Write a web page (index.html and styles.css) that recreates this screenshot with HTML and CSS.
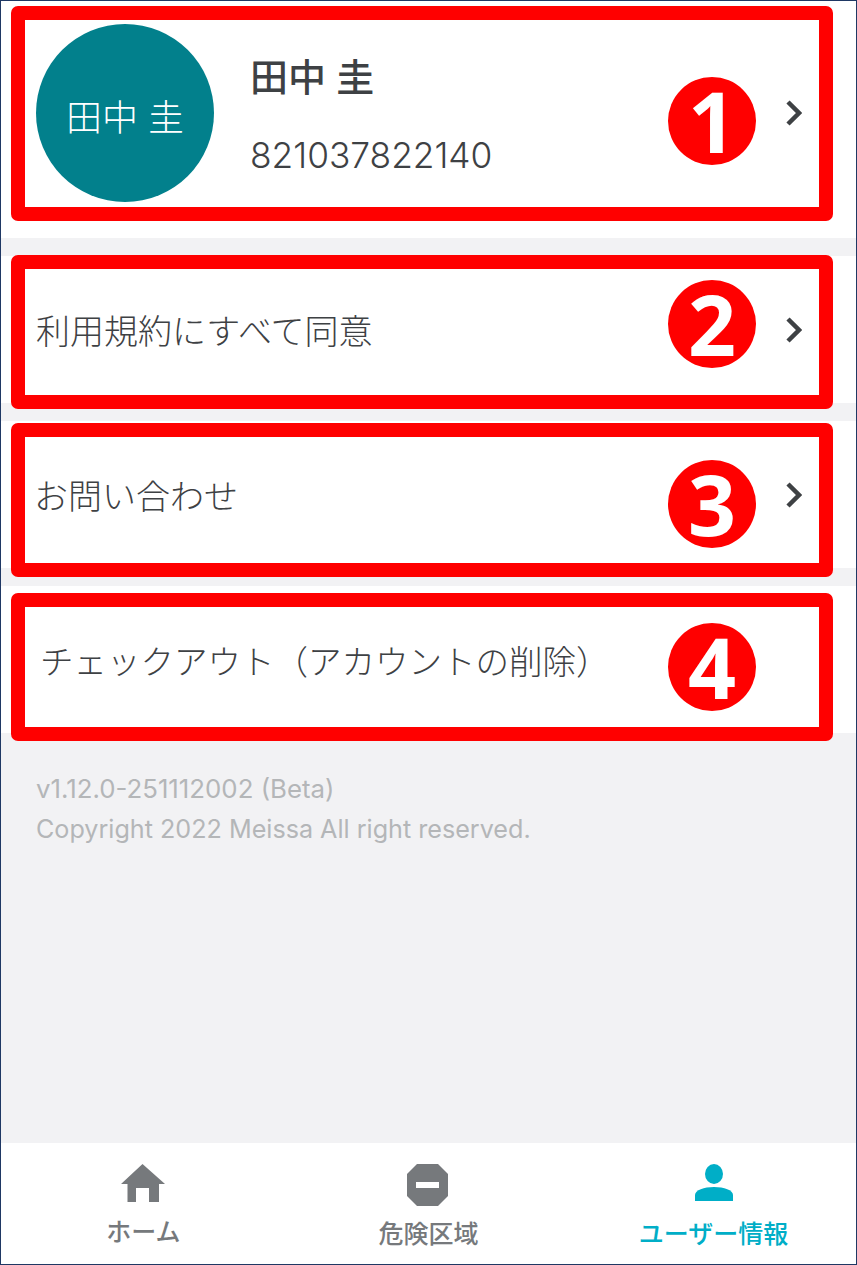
FILE: index.html
```html
<!DOCTYPE html>
<html lang="ja">
<head>
    <meta charset="UTF-8">
    <meta name="viewport" content="width=device-width, initial-scale=1.0">
    <title>ユーザー情報</title>
    <link rel="stylesheet" href="styles.css">
</head>
<body>
    <div class="screen">
        <main class="content">
            <a class="row profile">
                <div class="avatar">田中 圭</div>
                <div class="profile-info">
                    <div class="profile-name">田中 圭</div>
                    <div class="profile-id">821037822140</div>
                </div>
                <svg class="chevron" viewBox="0 0 16 26"><polyline points="2,2 13,13 2,24"/></svg>
                <span class="frame frame-1"></span>
                <span class="badge badge-1">1</span>
            </a>

            <a class="row">
                <span class="row-label">利用規約にすべて同意</span>
                <svg class="chevron" viewBox="0 0 16 26"><polyline points="2,2 13,13 2,24"/></svg>
                <span class="frame frame-2"></span>
                <span class="badge badge-2">2</span>
            </a>

            <a class="row row-contact">
                <span class="row-label">お問い合わせ</span>
                <svg class="chevron" viewBox="0 0 16 26"><polyline points="2,2 13,13 2,24"/></svg>
                <span class="frame frame-3"></span>
                <span class="badge badge-3">3</span>
            </a>

            <a class="row row-checkout">
                <span class="row-label">チェックアウト（アカウントの削除）</span>
                <span class="frame frame-4"></span>
                <span class="badge badge-4">4</span>
            </a>

            <footer class="about">
                <p class="about-version">v1.12.0-251112002 (Beta)</p>
                <p>Copyright 2022 Meissa All right reserved.</p>
            </footer>
        </main>

        <nav class="tabbar">
            <a class="tab tab-home">
                <svg class="tab-icon" width="44" height="38" viewBox="0 0 44 38">
                    <path d="M21.5 0L44 20H38V38H28V24H15V38H6.5V20H0Z"/>
                </svg>
                <span class="tab-label">ホーム</span>
            </a>
            <a class="tab tab-danger">
                <svg class="tab-icon" width="41" height="42" viewBox="0 0 41 42">
                    <path d="M10 0H31L41 10V32L31 42H10L0 32V10Z"/>
                    <rect class="tab-icon-bar" x="9" y="18" width="23" height="6"/>
                </svg>
                <span class="tab-label">危険区域</span>
            </a>
            <a class="tab tab-active">
                <svg class="tab-icon" width="38" height="37" viewBox="0 0 38 37">
                    <ellipse cx="19" cy="10" rx="9" ry="10"/>
                    <path d="M0 37V31C0 26 9 23 19 23C29 23 38 26 38 31V37Z"/>
                </svg>
                <span class="tab-label">ユーザー情報</span>
            </a>
        </nav>
    </div>
</body>
</html>
```

FILE: styles.css
```css
* {
    box-sizing: border-box;
}

body {
    margin: 0;
    font-family: Inter, "Noto Sans CJK JP", sans-serif;
    color: #3e4144;
}

.screen {
    display: flex;
    flex-direction: column;
    height: 1265px;
    border: 1px solid #1f3864;
    background-color: #f2f2f4;
}

.content {
    flex: 1;
}

/* rows */
.row {
    position: relative;
    display: flex;
    align-items: center;
    justify-content: space-between;
    height: 147px;
    margin-bottom: 18px;
    padding: 0 54px 0 35px;
    background-color: #fff;
}

.row-label {
    font-size: 34px;
    font-weight: 300;
    white-space: nowrap;
}

.row-contact {
    padding-left: 33px;
}

.row-checkout {
    margin-bottom: 0;
    padding-left: 39px;
}

.row-checkout .row-label {
    font-size: 33.5px;
}

.chevron {
    flex: none;
    width: 16px;
    height: 26px;
}

.chevron polyline {
    fill: none;
    stroke: #3e4144;
    stroke-width: 4.5;
}

/* profile */
.profile {
    justify-content: flex-start;
    height: 237px;
    padding-top: 23px;
    padding-bottom: 36px;
}

.avatar {
    display: flex;
    flex: none;
    align-items: center;
    justify-content: center;
    width: 178px;
    height: 178px;
    padding-top: 4px;
    border-radius: 50%;
    background-color: #02808c;
    color: #fff;
    font-size: 36px;
    font-weight: 300;
}

.profile-info {
    flex: 1;
    margin-top: 2px;
    margin-left: 36px;
}

.profile-name {
    font-size: 38px;
    font-weight: 500;
    line-height: 50px;
}

.profile-id {
    margin-top: 34px;
    font-size: 35.3px;
    font-weight: 300;
    line-height: 40px;
}

/* red annotations */
.frame {
    position: absolute;
    left: 10px;
    width: 822px;
    border: 14px solid #f00;
    border-radius: 7px;
}

.frame-1 {
    top: 5px;
    height: 215px;
}

.frame-2 {
    top: -1px;
    height: 154px;
}

.frame-3 {
    top: 2px;
    height: 154px;
}

.frame-4 {
    top: 7px;
    height: 148px;
}

.badge {
    position: absolute;
    left: 667px;
    width: 88px;
    height: 88px;
    border-radius: 50%;
    background-color: #f00;
    color: #fff;
    font-family: "Open Sans", sans-serif;
    font-size: 84px;
    font-weight: 700;
    line-height: 88px;
    text-align: center;
}

.badge-1 {
    top: 76px;
}

.badge-2 {
    top: 24px;
}

.badge-3 {
    top: 39px;
}

.badge-4 {
    top: 37px;
}

/* version */
.about {
    padding: 36px 35px 0;
    color: #b4b6b8;
    font-size: 25.15px;
    line-height: 40px;
}

.about p {
    margin: 0;
}

.about-version {
    font-size: 25.8px;
}

/* bottom tabs */
.tabbar {
    display: grid;
    grid-template-columns: repeat(3, 1fr);
    height: 121px;
    background-color: #fff;
}

.tab {
    display: flex;
    flex-direction: column;
    align-items: center;
    padding-top: 21px;
    color: #76797c;
}

.tab-icon {
    display: block;
    fill: currentColor;
}

.tab-icon-bar {
    fill: #fff;
}

.tab-label {
    margin-top: 10px;
    font-size: 25px;
    font-weight: 500;
    line-height: 36px;
    white-space: nowrap;
}

.tab-home .tab-label {
    margin-top: 12px;
}

.tab-home .tab-icon {
    margin-right: 2px;
}

.tab-danger .tab-icon {
    margin-right: 2px;
}

.tab-active {
    color: #00aec7;
}

.tab-active .tab-label {
    margin-top: 15px;
}
```
